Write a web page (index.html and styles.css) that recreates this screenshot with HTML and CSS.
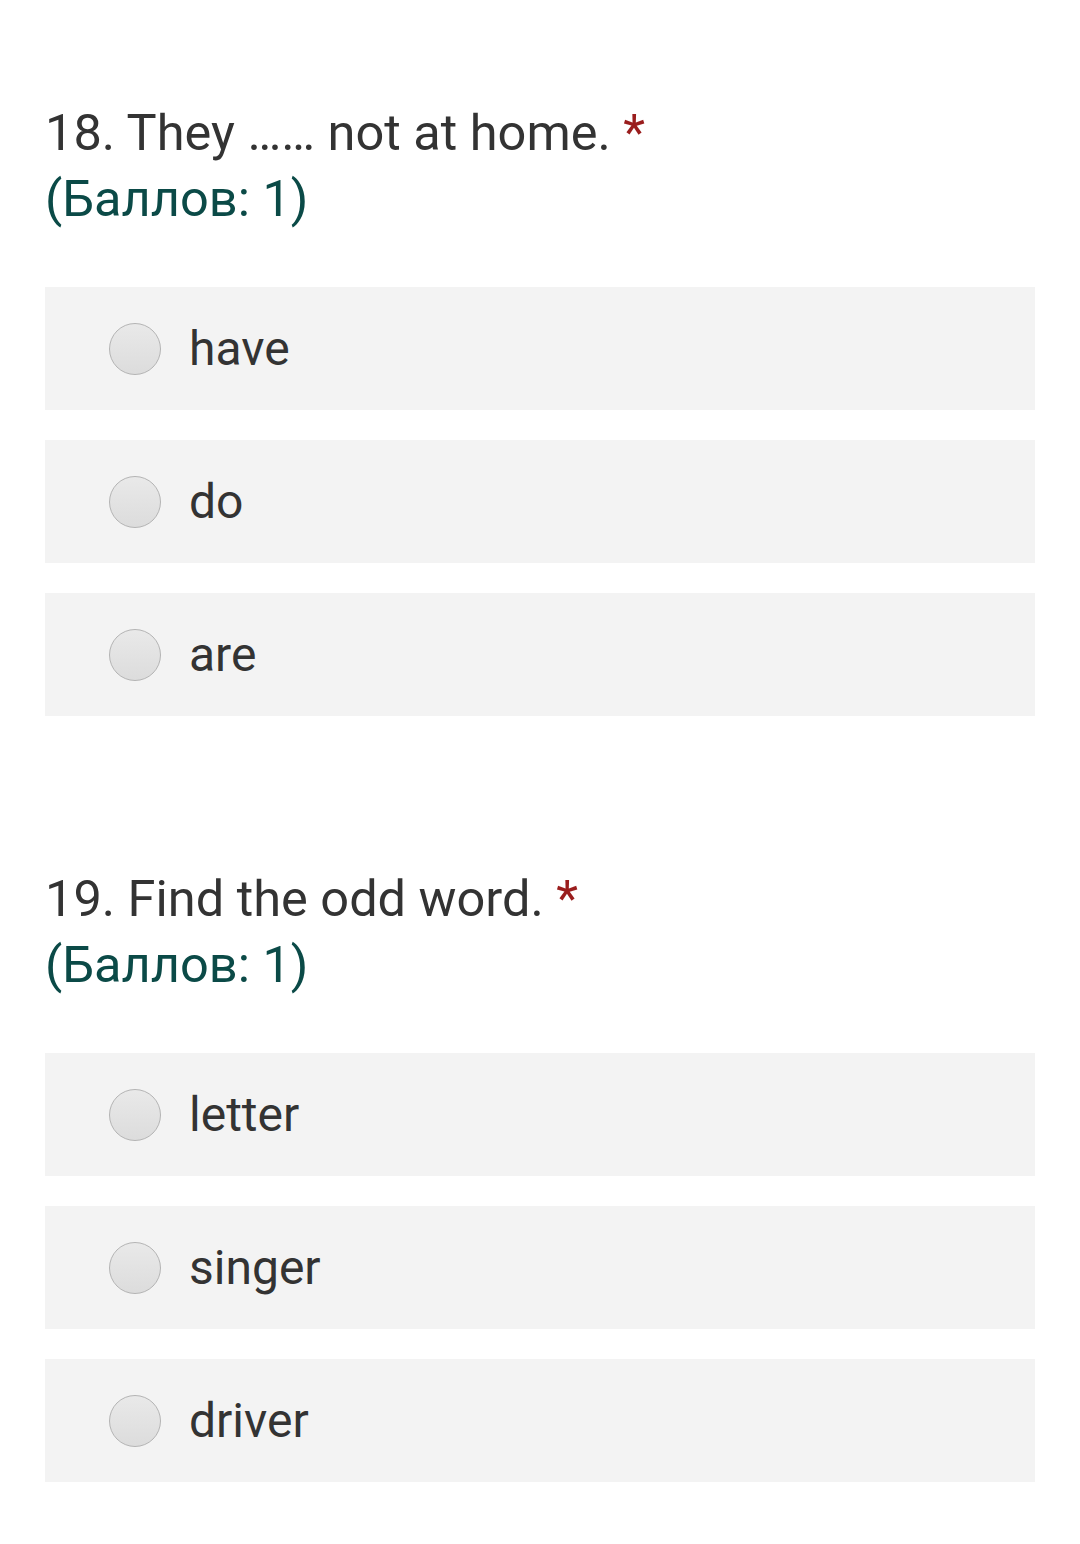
FILE: index.html
```html
<!DOCTYPE html>
<html lang="ru">
<head>
<meta charset="utf-8">
<link rel="stylesheet" href="styles.css">
</head>
<body>
<main class="form">
  <section class="question q1">
    <div class="title">18. They …… not at home. <span class="req">*</span></div>
    <div class="points">(Баллов: 1)</div>
    <div class="options">
      <label class="option"><span class="radio"></span><span class="label">have</span></label>
      <label class="option"><span class="radio"></span><span class="label">do</span></label>
      <label class="option"><span class="radio"></span><span class="label">are</span></label>
    </div>
  </section>
  <section class="question q2">
    <div class="title">19. Find the odd word. <span class="req">*</span></div>
    <div class="points">(Баллов: 1)</div>
    <div class="options">
      <label class="option"><span class="radio"></span><span class="label">letter</span></label>
      <label class="option"><span class="radio"></span><span class="label">singer</span></label>
      <label class="option"><span class="radio"></span><span class="label">driver</span></label>
    </div>
  </section>
</main>
</body>
</html>
```
FILE: styles.css
```css
html, body {
  margin: 0;
  padding: 0;
  background: #ffffff;
}
body {
  font-family: Roboto, "Noto Sans", sans-serif;
  color: #333333;
}
.form {
  padding: 100px 45px 0 45px;
  display: flex;
  flex-direction: column;
  gap: 150px;
}
.title, .points {
  font-size: 50.5px;
  line-height: 66px;
  padding-left: 0;
}
.title {
  color: #333333;
}
.req {
  color: #9a1d1d;
}
.points {
  color: #0b4a47;
}
.options {
  margin-top: 55px;
  display: flex;
  flex-direction: column;
  gap: 30px;
}
.option {
  height: 123px;
  background: #f3f3f3;
  display: flex;
  align-items: center;
  padding-left: 64px;
}
.radio {
  width: 50px;
  height: 50px;
  border-radius: 50%;
  border: 1px solid #b4b4b4;
  background: linear-gradient(#e9e9e9, #dcdcdc);
  flex: none;
  margin-right: 28px;
}
.label {
  font-size: 48px;
  color: #333333;
}
```
